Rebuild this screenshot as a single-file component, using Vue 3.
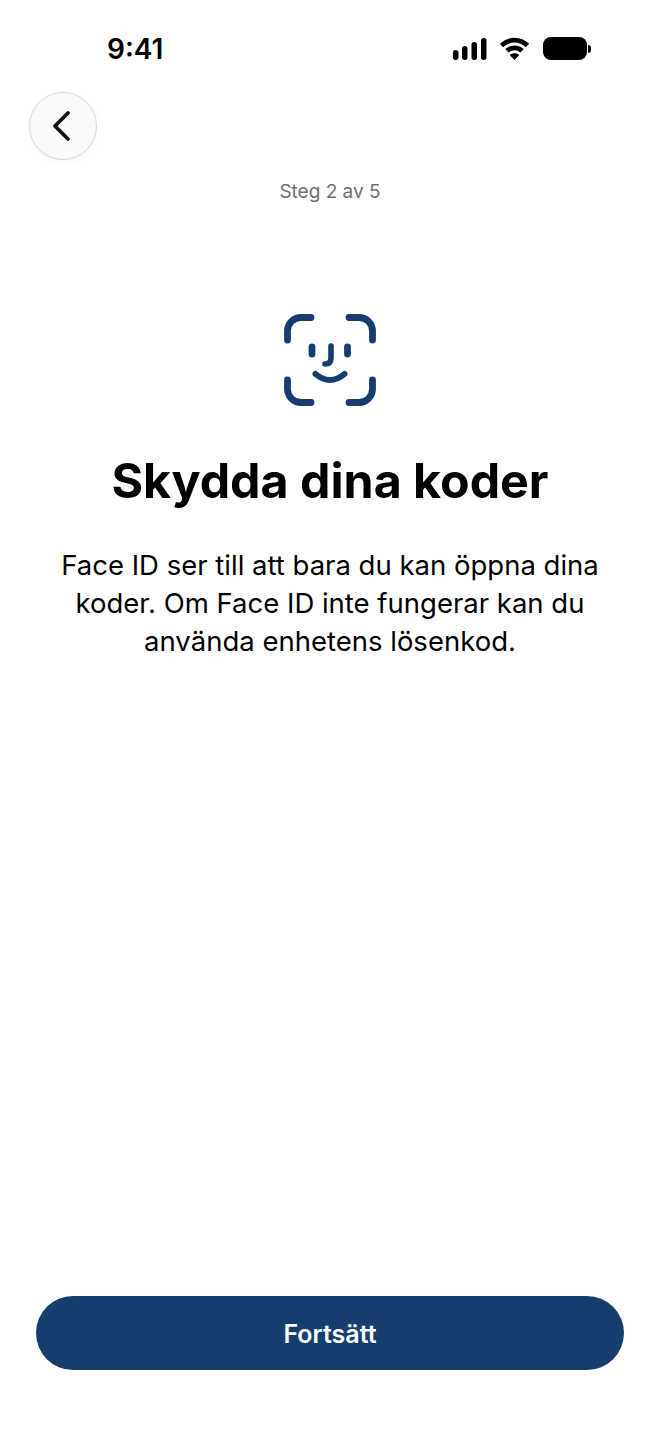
<template>
  <div class="screen">
    <div class="status-bar">
      <span class="time">9:41</span>
      <div class="status-icons">
        <svg class="signal" width="34" height="24" viewBox="0 0 34 24" fill="#000">
          <rect x="0" y="12" width="5.500" height="10" rx="2.700" />
          <rect x="9" y="8" width="5.500" height="14" rx="2.700" />
          <rect x="18.500" y="4" width="5.500" height="18" rx="2.700" />
          <rect x="28" y="0" width="5.500" height="22" rx="2.700" />
        </svg>
        <svg class="wifi" width="30" height="24" viewBox="0 0 30 24" fill="none" stroke="#000" stroke-width="4.800">
          <path d="M1.500 8.600 C9 1.400 20 1.400 27.500 8.600" />
          <path d="M6.900 13.800 C11.300 9.800 17.700 9.800 22.100 13.800" />
          <path d="M14.500 23 L9.700 18 C12.500 15.800 16.500 15.800 19.300 18 Z" fill="#000" stroke="none" />
        </svg>
        <div class="battery">
          <div class="battery-body"></div>
          <div class="battery-nub"></div>
        </div>
      </div>
    </div>

    <div class="nav">
      <button class="back-btn">
        <svg width="24" height="32" viewBox="0 0 24 32" fill="none" stroke="#111" stroke-width="3.800" stroke-linecap="round" stroke-linejoin="round">
          <path d="M18 3 L5 16 L18 29" />
        </svg>
      </button>
    </div>

    <p class="step">Steg 2 av 5</p>

    <main class="content">
      <svg class="face-id" width="100" height="100" viewBox="0 0 100 100" fill="none" stroke="#153d6d" stroke-width="6.800" stroke-linecap="round">
        <path d="M7.500 30 V21 A13.500 13.500 0 0 1 21 7.500 H31" />
        <path d="M69 7.500 H79 A13.500 13.500 0 0 1 92.500 21 V30" />
        <path d="M7.500 70 V79 A13.500 13.500 0 0 0 21 92.500 H31" />
        <path d="M69 92.500 H79 A13.500 13.500 0 0 0 92.500 79 V70" />
        <path d="M32 37 V44" />
        <path d="M67.500 37 V44" />
        <path d="M51 36 V48 Q51 54 45 54" stroke-width="5.600" />
        <path d="M35.500 64 Q50 76 64.500 64" stroke-width="6" />
      </svg>
      <h1 class="title">Skydda dina koder</h1>
      <p class="desc">Face ID ser till att bara du kan öppna dina koder. Om Face ID inte fungerar kan du använda enhetens lösenkod.</p>
    </main>

    <div class="footer">
      <button class="continue-btn">Fortsätt</button>
    </div>
  </div>
</template>

<script setup>
</script>

<style scoped>
.screen {
  width: 660px;
  height: 1434px;
  display: flex;
  flex-direction: column;
  background: #fff;
  color: #000;
  font-family: Inter, "Liberation Sans", sans-serif;
}

.status-bar {
  height: 92px;
  flex-shrink: 0;
  display: flex;
  justify-content: space-between;
  align-items: flex-start;
  padding: 0 69px 0 107px;
}

.time {
  margin-top: 32px;
  font-size: 28px;
  line-height: 34px;
  font-weight: 600;
}

.status-icons {
  margin-top: 37px;
  display: flex;
  align-items: flex-start;
  gap: 13px;
}

.signal {
  margin-top: 1px;
}

.battery {
  display: flex;
  align-items: center;
  gap: 1px;
  height: 23px;
}

.battery-body {
  width: 44px;
  height: 23px;
  border-radius: 8px;
  background: #000;
}

.battery-nub {
  width: 3px;
  height: 8px;
  border-radius: 0 3px 3px 0;
  background: #000;
}

.nav {
  padding-left: 29px;
}

.back-btn {
  width: 68px;
  height: 68px;
  padding: 0;
  display: flex;
  align-items: center;
  justify-content: center;
  border: 1px solid #d9d9d9;
  border-radius: 50%;
  background: #fafafa;
  box-shadow: 0 2px 6px rgba(0, 0, 0, 0.03);
}

.back-btn svg {
  margin-right: 3px;
}

.step {
  margin: 20px 0 0;
  text-align: center;
  font-size: 19px;
  line-height: 24px;
  color: #6f6f6f;
}

.content {
  flex: 1;
  display: flex;
  flex-direction: column;
  align-items: center;
  padding: 106px 40px 0;
}

.title {
  margin: 39px 0 0;
  font-size: 48.300px;
  line-height: 64px;
  font-weight: 700;
  text-align: center;
}

.desc {
  margin: 33px 0 0;
  font-size: 27.500px;
  line-height: 38px;
  text-align: center;
}

.footer {
  padding: 0 36px 64px;
}

.continue-btn {
  width: 100%;
  height: 74px;
  padding: 2px 0 0;
  border: none;
  border-radius: 37px;
  background: #153d6d;
  color: #fff;
  font-family: inherit;
  font-size: 25px;
  font-weight: 600;
}
</style>
